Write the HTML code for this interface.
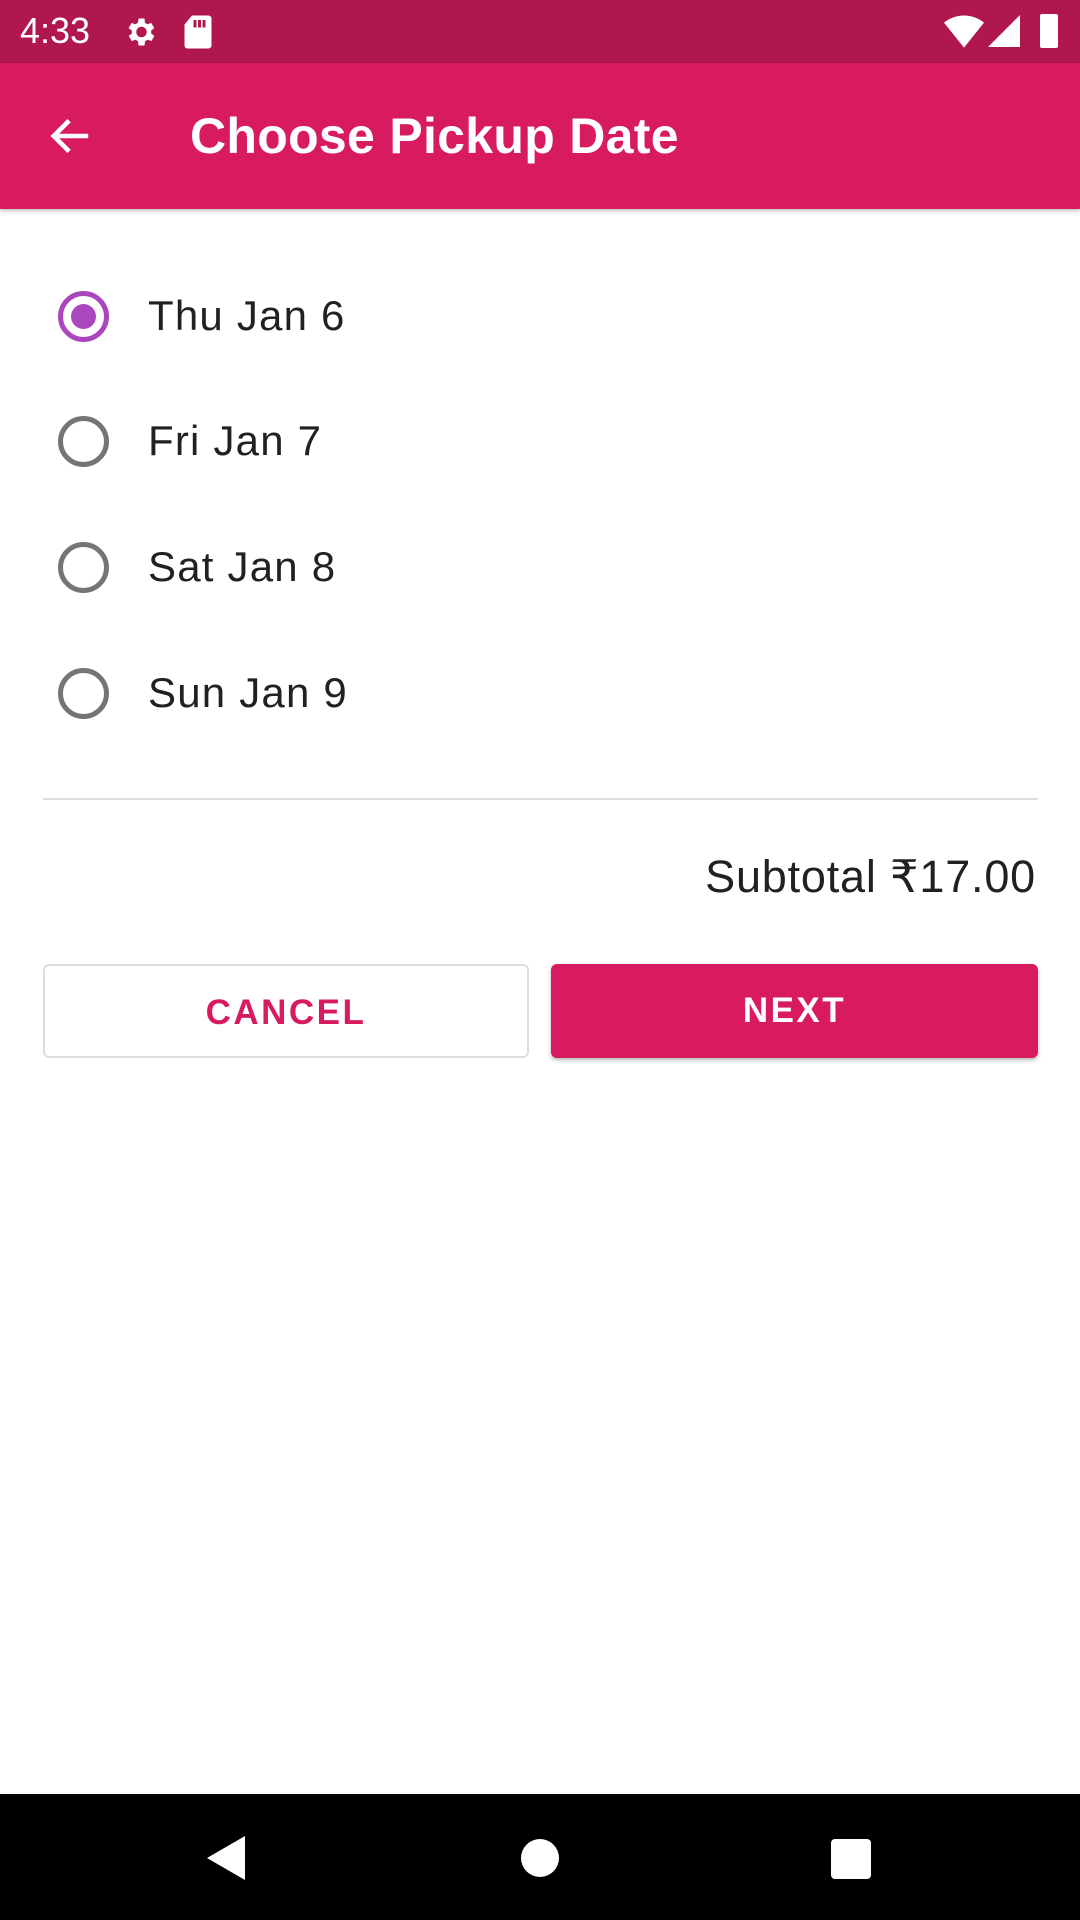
<!DOCTYPE html>
<html><head><meta charset="utf-8"><style>
*{margin:0;padding:0;box-sizing:border-box}
body{width:1080px;height:1920px;background:#fff;font-family:"Liberation Sans",sans-serif;position:relative;overflow:hidden}
.sb{position:absolute;left:0;top:0;width:1080px;height:63px;background:#B0174F;color:#fff}
.ab{position:absolute;left:0;top:63px;width:1080px;height:146px;background:#D81B60;box-shadow:0 2px 4px rgba(0,0,0,.25)}
.title{position:absolute;left:190px;top:0;line-height:146px;color:#fff;font-size:50px;font-weight:bold;letter-spacing:0.3px}
.row{position:absolute;left:0;height:100px;width:1080px}
.radio{position:absolute;left:58px;width:51px;height:51px;border-radius:50%;border:5px solid #757575}
.radio.on{border-color:#AB47BC}
.radio.on:after{content:"";position:absolute;left:8px;top:8px;width:25px;height:25px;border-radius:50%;background:#AB47BC}
.lbl{position:absolute;left:148px;font-size:42px;color:#212121;letter-spacing:1.2px}
.btn{position:absolute;top:964px;height:94px;border-radius:6px;text-align:center;line-height:94px;font-size:35px;font-weight:bold;letter-spacing:2.5px}
.nav{position:absolute;left:0;top:1794px;width:1080px;height:126px;background:#000}
</style></head><body>
<div class="sb">
<span style="position:absolute;left:20px;top:10px;font-size:36px">4:33</span>
<svg style="position:absolute;left:122px;top:14px" width="36" height="36" viewBox="0 0 24 24"><path fill="#fff" d="M19.4 13a7.5 7.5 0 0 0 0-2l2.1-1.6-2-3.5-2.5 1a7 7 0 0 0-1.7-1L15 3h-4l-.4 2.9a7 7 0 0 0-1.7 1l-2.5-1-2 3.5L6.6 11a7.5 7.5 0 0 0 0 2l-2.1 1.6 2 3.5 2.5-1a7 7 0 0 0 1.7 1L11 21h4l.4-2.9a7 7 0 0 0 1.7-1l2.5 1 2-3.5zM13 15.5a3.5 3.5 0 1 1 0-7 3.5 3.5 0 0 1 0 7z"/></svg>
<svg style="position:absolute;left:183px;top:14px" width="30" height="36" viewBox="0 0 20 24"><path fill="#fff" d="M6 1h11a2 2 0 0 1 2 2v18a2 2 0 0 1-2 2H3a2 2 0 0 1-2-2V7z M7 4v5h2V4zM10 4v5h2V4zM13 4v5h2V4z" fill-rule="evenodd"/></svg>
<svg style="position:absolute;left:944px;top:14px" width="40" height="34" viewBox="0 0 24 20"><path fill="#fff" d="M12 20L0 5a19 19 0 0 1 24 0z"/></svg>
<svg style="position:absolute;left:988px;top:14px" width="32" height="34" viewBox="0 0 20 20"><path fill="#fff" d="M20 0v20H0z"/></svg>
<div style="position:absolute;left:1040px;top:14px;width:18px;height:34px;background:#fff;border-radius:2px"></div>
</div>
<div class="ab">
<svg style="position:absolute;left:48px;top:50px" width="46" height="46" viewBox="0 0 24 24"><path fill="none" stroke="#fff" stroke-width="2.4" d="M21 12H4M11 4l-8 8 8 8"/></svg>
<div class="title">Choose Pickup Date</div>
</div>
<div class="row" style="top:266px"><div class="radio on" style="top:25px"></div><div class="lbl" style="top:26px">Thu Jan 6</div></div>
<div class="row" style="top:391px"><div class="radio" style="top:25px"></div><div class="lbl" style="top:26px">Fri Jan 7</div></div>
<div class="row" style="top:517px"><div class="radio" style="top:25px"></div><div class="lbl" style="top:26px">Sat Jan 8</div></div>
<div class="row" style="top:643px"><div class="radio" style="top:25px"></div><div class="lbl" style="top:26px">Sun Jan 9</div></div>
<div style="position:absolute;left:43px;top:798px;width:995px;height:2px;background:#ddd"></div>
<div style="position:absolute;right:44px;top:850px;font-size:45px;color:#212121;letter-spacing:0.8px">Subtotal ₹17.00</div>
<div class="btn" style="left:43px;width:486px;border:2px solid #ddd;color:#D81B60">CANCEL</div>
<div class="btn" style="left:551px;width:487px;background:#D81B60;color:#fff;box-shadow:0 2px 4px rgba(0,0,0,.3)">NEXT</div>
<div class="nav">
<svg style="position:absolute;left:205px;top:42px" width="40" height="44" viewBox="0 0 20 22"><path fill="#fff" d="M20 0v22L1 11z"/></svg>
<div style="position:absolute;left:521px;top:45px;width:38px;height:38px;border-radius:50%;background:#fff"></div>
<div style="position:absolute;left:831px;top:45px;width:40px;height:40px;border-radius:4px;background:#fff"></div>
</div>
</body></html>
